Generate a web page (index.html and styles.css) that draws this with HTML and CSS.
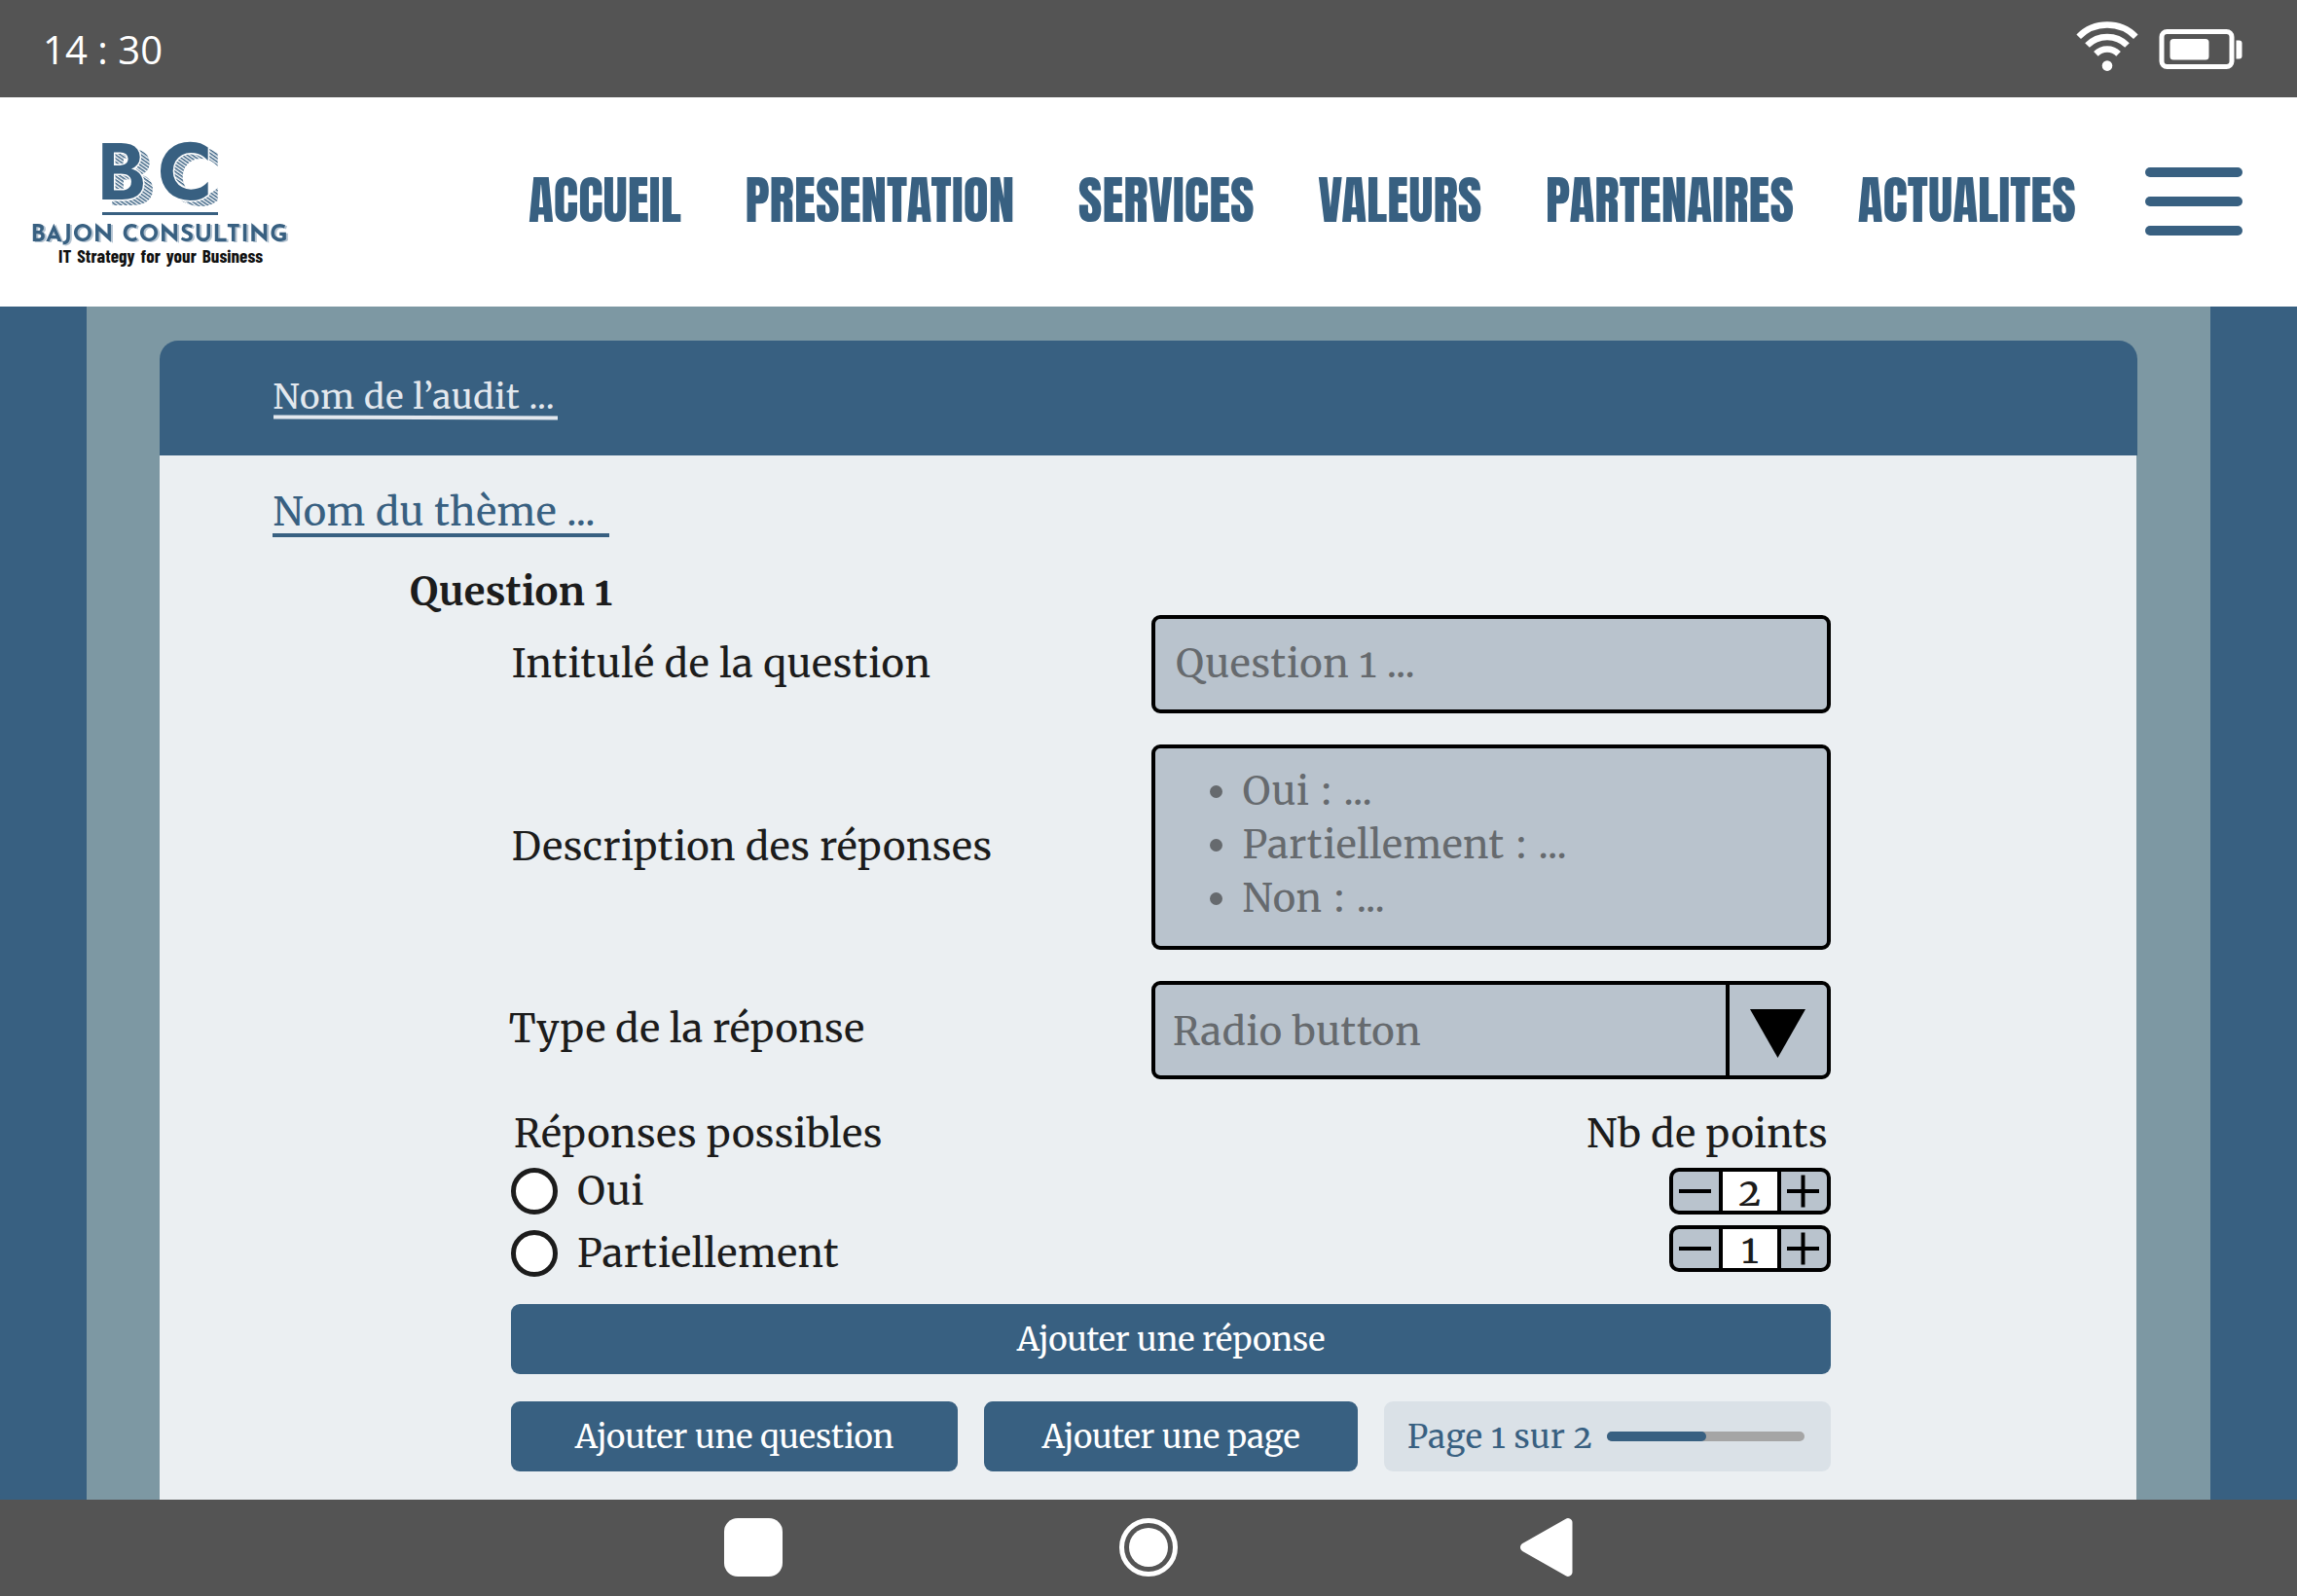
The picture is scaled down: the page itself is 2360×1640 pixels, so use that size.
FILE: index.html
```html
<!DOCTYPE html>
<html lang="fr">
<head>
<meta charset="utf-8">
<title>Bajon Consulting – Création d’un audit</title>
<link rel="stylesheet" href="styles.css">
</head>
<body>
<div class="status-bar">
  <span class="clock">14 : 30</span>
  <div class="status-icons">
    <svg class="wifi" viewBox="0 0 66 54" fill="none" stroke="#fff" stroke-width="6.5">
      <path d="M3.7 17.7a41.5 41.5 0 0 1 58.6 0"/>
      <path d="M12.5 26.5a29 29 0 0 1 41 0"/>
      <path d="M21.4 35.4a16.4 16.4 0 0 1 23.2 0"/>
      <circle cx="33" cy="47.6" r="5.3" fill="#fff" stroke="none"/>
    </svg>
    <svg class="battery" viewBox="0 0 86 42">
      <rect x="3" y="2.5" width="72" height="36" rx="5.5" fill="none" stroke="#fff" stroke-width="5"/>
      <rect x="11.5" y="10" width="40" height="21.5" rx="3.5" fill="#fff"/>
      <path d="M79.5 11.5h3a3 3 0 0 1 3 3v13a3 3 0 0 1-3 3h-3z" fill="#fff"/>
    </svg>
  </div>
</div>

<header class="site-header">
  <svg class="logo" viewBox="0 0 280 140">
    <defs>
      <pattern id="hatch" width="3" height="3" patternUnits="userSpaceOnUse" patternTransform="rotate(35)">
        <rect width="3" height="1.5" fill="#386081"/>
      </pattern>
    </defs>
    <g class="logo-initials">
      <text x="79" y="71" fill="url(#hatch)">B</text>
      <text x="142" y="71" fill="url(#hatch)">C</text>
      <text class="solid" x="69" y="65">B</text>
      <text class="solid" x="132" y="65">C</text>
    </g>
    <rect x="75" y="78" width="119" height="3" fill="#386081"/>
    <text class="logo-name" x="1.500" y="108" textLength="264">BAJON CONSULTING</text>
    <text class="logo-tag" x="30" y="130" textLength="210">IT Strategy for your Business</text>
  </svg>
  <nav class="main-nav">
    <a>ACCUEIL</a>
    <a>PRESENTATION</a>
    <a>SERVICES</a>
    <a>VALEURS</a>
    <a>PARTENAIRES</a>
    <a>ACTUALITES</a>
  </nav>
  <div class="burger"><i></i><i></i><i></i></div>
</header>

<main class="page">
  <section class="card">
    <div class="card-head"><span class="audit-name">Nom de l’audit ...</span></div>
    <div class="card-body">
      <h1 class="theme-name">Nom du thème ...</h1>
      <h2 class="question-title">Question 1</h2>
      <form class="question">
        <div class="row">
          <label class="label">Intitulé de la question</label>
          <div class="field">Question 1 ...</div>
        </div>
        <div class="row row-tall">
          <label class="label label-description">Description des réponses</label>
          <ul class="field answers">
            <li>Oui : ...</li>
            <li>Partiellement : ...</li>
            <li>Non : ...</li>
          </ul>
        </div>
        <div class="row">
          <label class="label label-type">Type de la réponse</label>
          <div class="field select"><span class="select-value">Radio button</span><span class="select-arrow"><svg viewBox="0 0 57 50"><path d="M0 0h57L28.500 50z"/></svg></span></div>
        </div>
        <div class="answers-head"><span>Réponses possibles</span><span>Nb de points</span></div>
        <div class="answers-body">
          <div class="options">
            <label class="option"><i class="radio"></i><span>Oui</span></label>
            <label class="option"><i class="radio"></i><span>Partiellement</span></label>
          </div>
          <div class="steppers">
            <div class="stepper"><span class="step minus"></span><span class="count">2</span><span class="step plus"></span></div>
            <div class="stepper"><span class="step minus"></span><span class="count">1</span><span class="step plus"></span></div>
          </div>
        </div>
        <div class="button">Ajouter une réponse</div>
        <div class="actions">
          <div class="button">Ajouter une question</div>
          <div class="button">Ajouter une page</div>
          <div class="pager"><span>Page 1 sur 2</span><span class="progress"><i></i></span></div>
        </div>
      </form>
    </div>
  </section>
</main>

<footer class="nav-bar">
  <svg viewBox="0 0 60 60"><rect width="60" height="60" rx="14" fill="#fff"/></svg>
  <svg viewBox="0 0 60 60"><circle cx="30" cy="30" r="27.500" fill="none" stroke="#fff" stroke-width="5"/><circle cx="30" cy="30" r="20" fill="#fff"/></svg>
  <svg viewBox="0 0 60 60"><path d="M10.500 30L55 4.600V55.400z" fill="#fff" stroke="#fff" stroke-width="9" stroke-linejoin="round"/></svg>
</footer>
</body>
</html>
```
FILE: styles.css
```css
* { box-sizing: border-box; }
html, body { margin: 0; }
body {
  width: 2360px;
  height: 1640px;
  display: flex;
  flex-direction: column;
  overflow: hidden;
  background: #386081;
  color: #1c1c1c;
  font-family: Merriweather, "DejaVu Serif Condensed", "DejaVu Serif", serif;
  font-feature-settings: "onum";
  font-size: 40px;
  letter-spacing: .57px;
}
svg { display: block; }
.status-bar {
  height: 100px;
  flex: none;
  display: flex;
  justify-content: space-between;
  padding: 0 56px 0 44px;
  background: #545454;
}
.clock {
  font: 400 40px/102px "Open Sans", sans-serif;
  letter-spacing: .05px;
  color: #fff;
}
.status-icons { display: flex; gap: 20px; padding-top: 20px; }
.wifi { width: 66px; height: 54px; }
.battery { width: 86px; height: 42px; margin-top: 10px; }

.site-header {
  height: 215px;
  flex: none;
  display: flex;
  padding: 0 56px 0 30px;
  background: #fff;
}
.logo { width: 280px; height: 140px; margin-top: 40px; overflow: visible; letter-spacing: 0; }
.logo-initials { font: 600 82px Jost, "Josefin Sans", Lato, sans-serif; }
.logo-initials .solid { fill: #386081; stroke: #fff; stroke-width: 3px; paint-order: stroke; }
.logo-name {
  font: 700 24px "Josefin Sans", Lato, sans-serif;
  fill: #386081;
  filter: drop-shadow(2px 1.500px 0 #b3c3d1);
}
.logo-tag { font: 700 19px "Barlow Condensed", Roboto, sans-serif; word-spacing: 2px; fill: #111; }
.main-nav { display: flex; gap: 65.600px; margin-left: 233px; letter-spacing: 0; }
.main-nav a {
  font: 400 53.300px/212px Anton, "Roboto Condensed", sans-serif;
  color: #386081;
}
.burger {
  display: flex;
  flex-direction: column;
  gap: 20px;
  margin: 72px 0 0 auto;
}
.burger i { width: 100px; height: 10px; border-radius: 5px; background: #386081; }

.page {
  height: 1226px;
  flex: none;
  margin: 0 89px;
  padding: 35px 75px 0;
  background: #7d98a3;
}
.card-head {
  height: 118px;
  padding: 31px 0 0 116.500px;
  border-radius: 19px 19px 0 0;
  background: #386081;
}
.audit-name {
  position: relative;
  display: inline-block;
  width: 292px;
  white-space: nowrap;
  font-size: 35px;
  line-height: 46px;
  letter-spacing: .82px;
  color: #e3e8ee;
}
.audit-name::after {
  content: "";
  position: absolute;
  left: 0;
  right: 0;
  top: 41.500px;
  height: 4px;
  background: #e3e8ee;
  transform: rotate(.2deg);
}
.card-body {
  height: 1073px;
  margin-right: 1.500px;
  padding: 32px 0 0 116px;
  background: #ebeff2;
}
.theme-name {
  width: 346px;
  height: 52px;
  margin: 0;
  border-bottom: 4px solid #386081;
  font-size: 40px;
  font-weight: 400;
  line-height: 52px;
  text-indent: .500px;
  white-space: nowrap;
  color: #386081;
}
.question-title {
  margin: 36px 0 4px 141px;
  font-size: 40px;
  line-height: 40px;
  font-weight: 700;
  letter-spacing: .2px;
}
.question { width: 1356px; margin-left: 245px; }
.row {
  display: grid;
  grid-template-columns: 658px 698px;
  height: 101px;
  margin-bottom: 32px;
  align-items: center;
}
.row-tall { height: 211px; }
.label { padding: 0 0 1px .700px; }
.label-description { letter-spacing: .43px; }
.label-type { margin-left: -3px; padding-bottom: 3px; letter-spacing: .3px; }
.field {
  height: 100%;
  margin: 0;
  padding: 0 0 1px 21px;
  display: flex;
  align-items: center;
  border: 4px solid #000;
  border-radius: 9px;
  background: #b9c3cd;
  color: #666a6e;
}
.answers {
  display: block;
  padding: 17px 0 0 56px;
  line-height: 55px;
  word-spacing: 2px;
  list-style: none;
}
.answers li { display: flex; align-items: center; }
.answers li::before {
  content: "";
  width: 13px;
  height: 13px;
  margin-right: 20.500px;
  border-radius: 50%;
  background: #666a6e;
}
.select { padding: 0 0 0 18px; justify-content: space-between; align-items: stretch; }
.select-value { padding-top: 4px; line-height: 89px; }
.select-arrow {
  width: 104px;
  border-left: 4px solid #000;
  padding: 25px 0 0 21px;
}
.select-arrow svg { width: 57px; height: 50px; }
.answers-head {
  display: flex;
  justify-content: space-between;
  margin-top: -1px;
  padding: 0 3px;
  line-height: 50px;
  letter-spacing: .45px;
}
.answers-body { display: flex; justify-content: space-between; height: 112px; margin: 10px 0 28px; }
.options { display: flex; flex-direction: column; gap: 16px; }
.option { display: flex; align-items: center; gap: 20px; height: 48px; line-height: 50px; }
.radio {
  width: 48px;
  height: 48px;
  border: 5px solid #1c1c1c;
  border-radius: 50%;
  background: #fff;
}
.steppers { display: flex; flex-direction: column; gap: 11px; }
.stepper {
  display: flex;
  width: 166px;
  height: 48px;
  border: 4px solid #000;
  border-radius: 10px;
  background: #b9c3cd;
}
.step { position: relative; flex: 1; }
.step::before, .plus::after {
  content: "";
  position: absolute;
  left: 6px;
  top: 18px;
  width: 33px;
  height: 4px;
  background: #000;
}
.plus::after { transform: rotate(90deg); }
.count {
  width: 64px;
  border: solid #000;
  border-width: 0 4px;
  background: #fff;
  text-align: center;
  line-height: 42px;
}
.button {
  height: 72px;
  border-radius: 9px;
  background: #386081;
  color: #fff;
  font-size: 33px;
  line-height: 73px;
  letter-spacing: -.13px;
  text-align: center;
}
.actions {
  display: grid;
  grid-template-columns: 459px 384px 459px;
  gap: 27px;
  margin-top: 28px;
}
.pager {
  display: flex;
  align-items: center;
  justify-content: space-between;
  padding: 0 27px 0 24px;
  border-radius: 9px;
  background: #dae1e7;
  color: #386081;
  font-size: 33px;
}
.progress { width: 203px; height: 10px; border-radius: 5px; background: #a5a5a5; }
.progress i { display: block; width: 50%; height: 10px; border-radius: 5px; background: #386081; }

.nav-bar {
  height: 99px;
  display: flex;
  justify-content: center;
  gap: 346px;
  padding-top: 19px;
  background: #545454;
}
.nav-bar svg { width: 60px; height: 60px; }
```
